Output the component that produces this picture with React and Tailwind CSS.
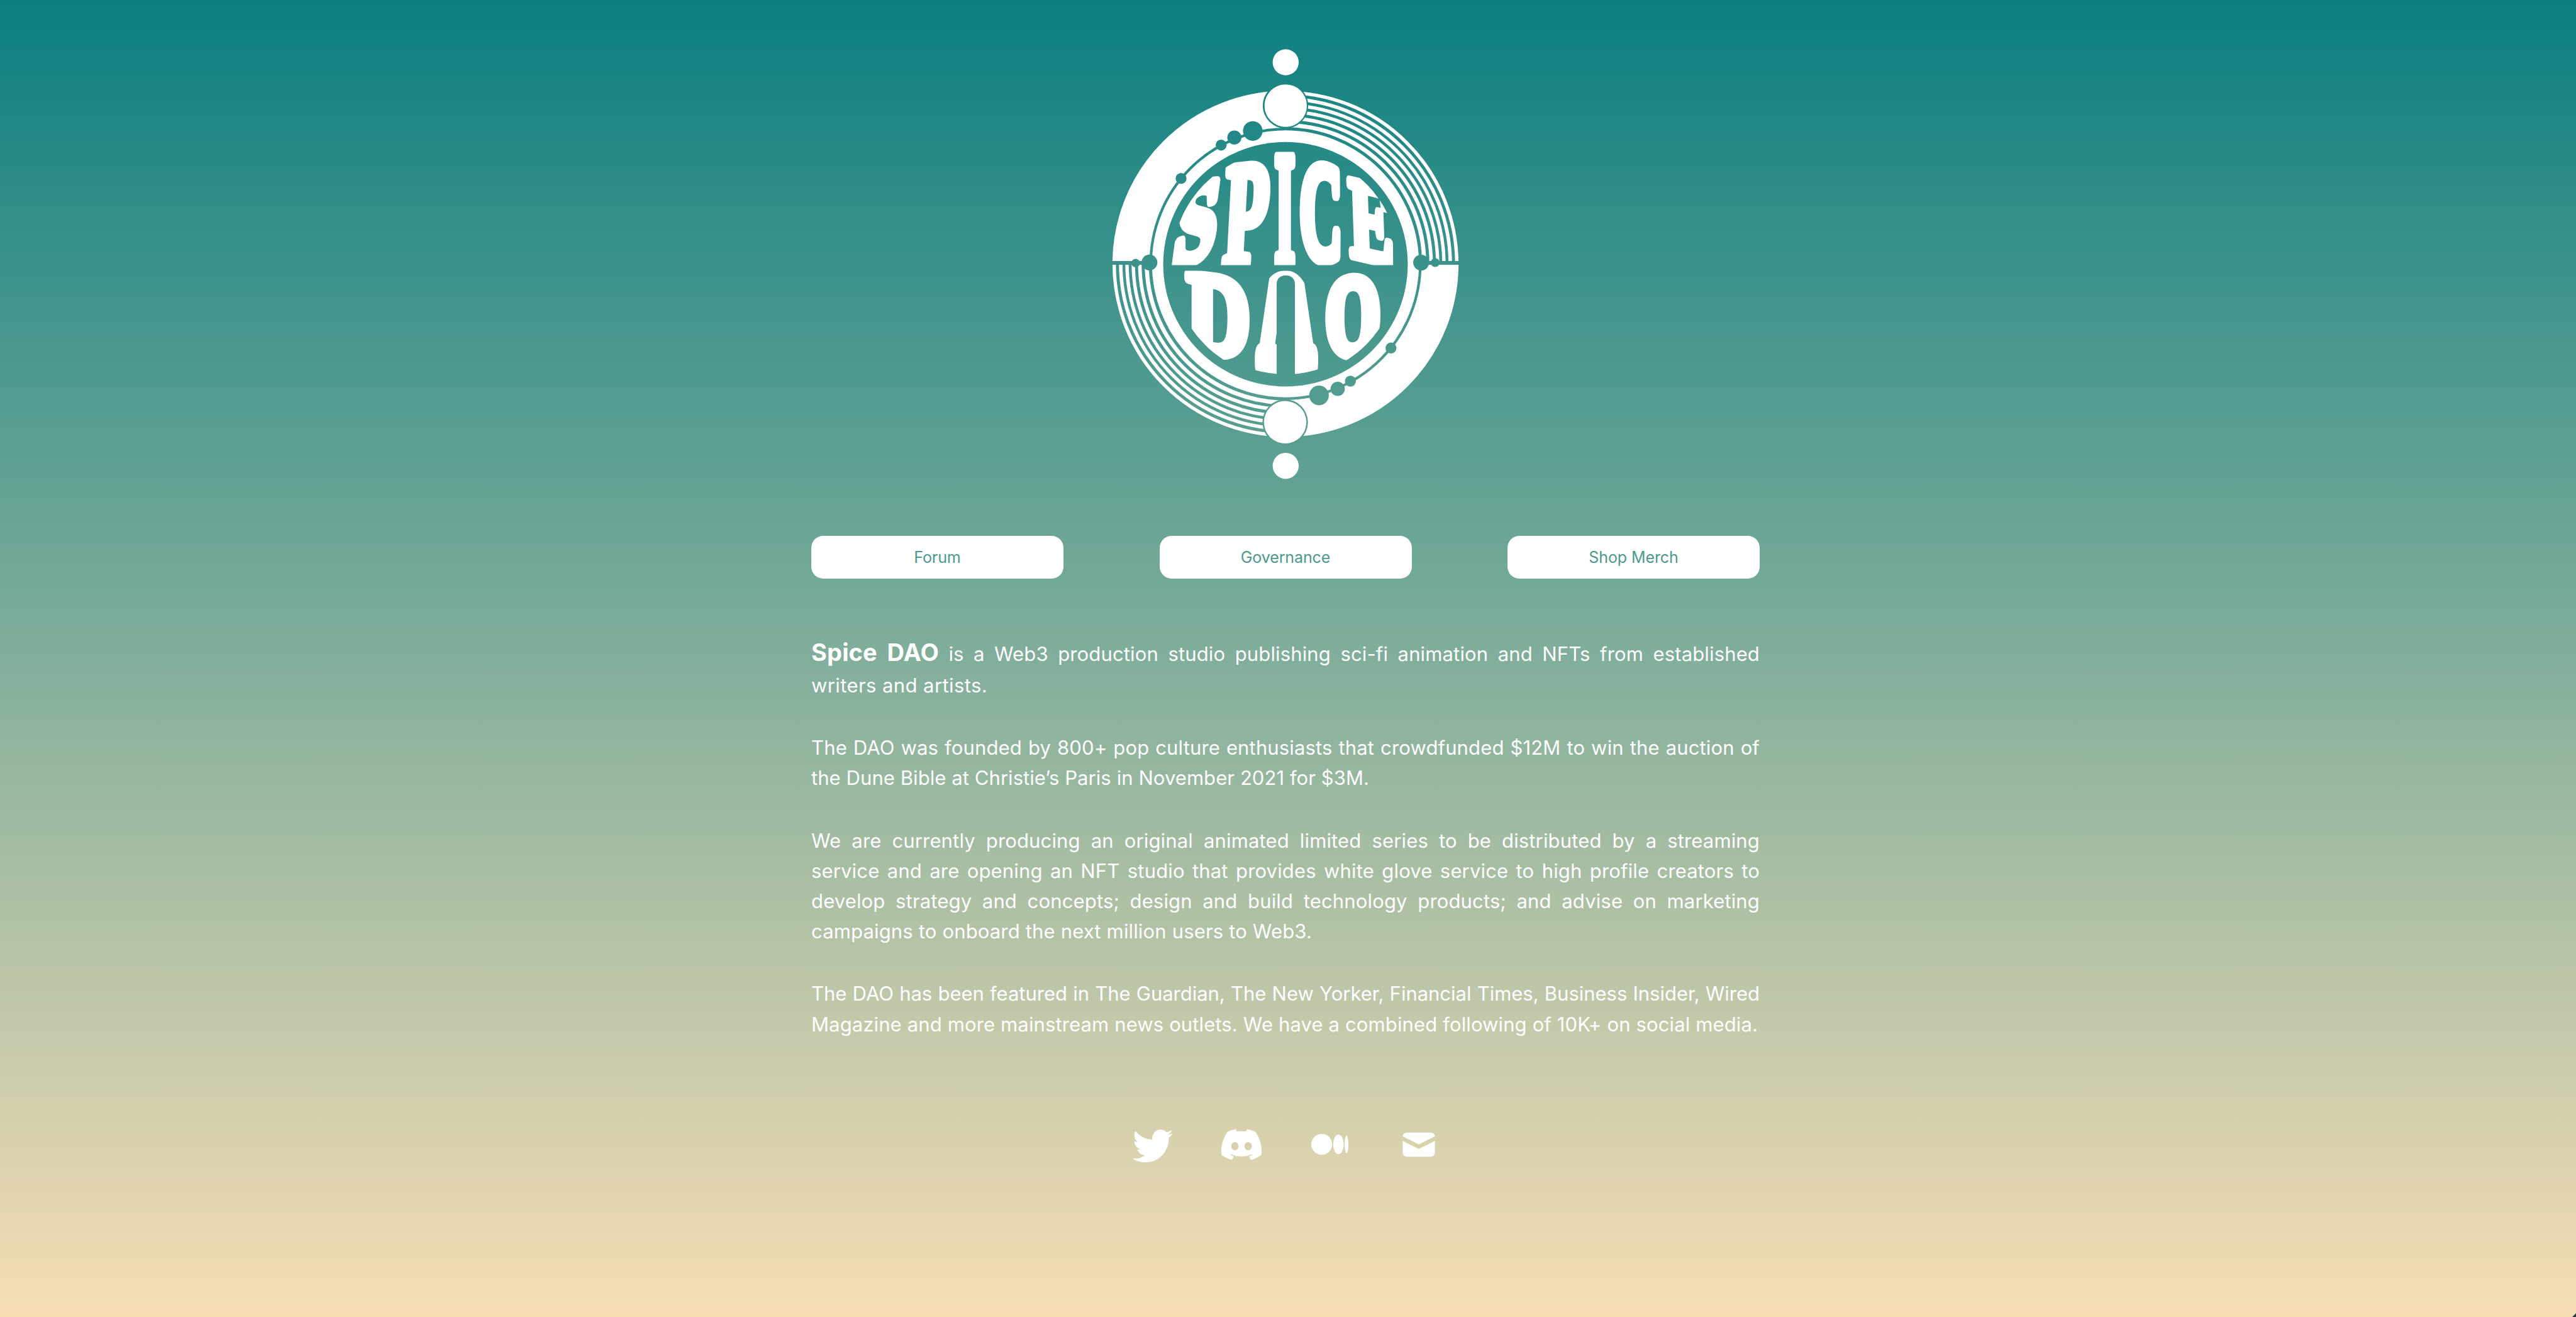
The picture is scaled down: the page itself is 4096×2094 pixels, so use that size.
import React from "react";
import { BsTwitter, BsDiscord, BsMedium } from "react-icons/bs";
import { HiMail } from "react-icons/hi";

const CX = 2044;
const CY = 419.5;

// Concentric stripes: mid radius and thickness
const stripes = [
  [272.4, 5.4],
  [262, 5.6],
  [252, 5.4],
  [242, 5.4],
  [231.6, 5.6],
  [220.5, 6.6],
];

const beads = [
  [1992, 208.3, 15.6],
  [1962.7, 218.7, 11.2],
  [1941.7, 230.7, 8.7],
  [1878, 283.7, 8.7],
  [1827.7, 417.3, 12.6],
  [1805.7, 418.3, 6.8],
  [2259.7, 417.5, 12.6],
  [2282, 417.5, 7],
  [2097.3, 628.7, 15.6],
  [2127, 618.3, 11.3],
  [2147.3, 606, 8.7],
  [2211.7, 553.3, 8.7],
];

// ch, target box x y w h, glyph box per 100 units (left, bottom, right, top), skewY, skewX, stroke
const upper = [
  ["S", 1875, 290, 57, 125, [3.5, -1.9, 51.4, 69.2], -17, -8, 16],
  ["P", 1949, 260, 67, 158, [1.6, 0, 60, 67.6], -6, -3, 14],
  ["I", 2028, 246, 30, 172, [2, 0, 37, 67.6], 0, 0, 14],
  ["C", 2071, 259, 60, 156, [4.9, -1.9, 68.7, 69.1], 5, 0, 16],
  ["E", 2147, 291, 65, 122, [1.6, 0, 64.1, 67.6], 13, 2, 13],
];
const letterD = ["D", 1889, 438, 94, 125, [1.4, 0, 69, 67.6], 7, 0, 15];
const letterA = ["A", 2003, 362, 82, 216, [0.9, 0, 68.9, 69], 0, 0, 31];
const letterO = ["O", 2112, 439, 78, 126, [3.5, -1.9, 74.3, 69.1], -3, 0, 17];

function Letter({ item }) {
  const [ch, x, y, w, h, [l, b, r, t], skewY, skewX, stroke] = item;
  const sx = w / (r - l);
  const sy = h / (t - b);
  return (
    <g
      transform={`translate(${x + w / 2} ${y + h / 2}) skewY(${skewY}) skewX(${skewX}) translate(${-w / 2} ${-h / 2})`}
    >
      <text
        transform={`scale(${sx} ${sy}) translate(${-l} ${t})`}
        className="font-['Liberation_Serif',serif] text-[100px] font-bold"
        fill="white"
        stroke="white"
        strokeWidth={stroke}
        strokeLinejoin="round"
        vectorEffect="non-scaling-stroke"
      >
        {ch}
      </text>
    </g>
  );
}

function Logo() {
  return (
    <svg className="block h-[700px] w-[560px]" viewBox="1764 70 560 700" role="img" aria-label="Spice DAO">
      <defs>
        <mask id="ring" maskUnits="userSpaceOnUse" x="1764" y="70" width="560" height="700">
          <rect x="1764" y="70" width="560" height="700" fill="white" />
          <circle cx={CX} cy={CY} r="214.3" fill="none" stroke="black" strokeWidth="4.2" />
          <circle cx={CX} cy="420.2" r="194.4" fill="black" />
          <rect x="1764" y="415" width="66" height="6" fill="black" />
          <rect x="2258" y="415" width="66" height="6" fill="black" />
          {beads.map(([x, y, r], i) => (
            <circle key={i} cx={x} cy={y} r={r} fill="black" />
          ))}
          <circle cx="2044" cy="168" r="36.2" fill="black" />
          <circle cx="2043.5" cy="671.3" r="36.2" fill="black" />
        </mask>
        <clipPath id="disc">
          <circle cx={CX} cy="420" r="181" />
        </clipPath>
        <clipPath id="upper">
          <rect x="1850" y="230" width="390" height="191.5" />
        </clipPath>
        <clipPath id="lower">
          <rect x="1850" y="430.5" width="390" height="170" />
        </clipPath>
        <clipPath id="arch">
          <path d="M1984 585L1999 520Q2002 430 2044 430Q2083 430 2092 520L2108 583Q2080 594 2046 596Q2010 594 1984 585Z" />
        </clipPath>
        <mask id="slot" maskUnits="userSpaceOnUse" x="1970" y="340" width="150" height="270">
          <rect x="1970" y="340" width="150" height="270" fill="white" />
          <rect x="2030" y="438" width="29" height="190" rx="13" fill="black" />
        </mask>
      </defs>

      <g mask="url(#ring)" fill="none" stroke="white">
        <circle cx={CX} cy={CY} r="204" strokeWidth="22" />
        <path d={`M${CX - 245} 418A245 245 0 0 1 ${CX} 174.5`} strokeWidth="60.4" />
        <path d={`M${CX + 245} 418A245 245 0 0 1 ${CX} 664.5`} strokeWidth="60.4" />
        {stripes.map(([r, w]) => (
          <g key={r} strokeWidth={w}>
            <path d={`M${CX} ${CY - r}A${r} ${r} 0 0 1 ${CX + r} 418`} />
            <path d={`M${CX} ${CY + r}A${r} ${r} 0 0 1 ${CX - r} 418`} />
          </g>
        ))}
      </g>

      <g fill="white">
        <circle cx="2044.3" cy="99" r="20.7" />
        <circle cx="2044.3" cy="168" r="33.7" />
        <circle cx="2043.5" cy="671.3" r="33.7" />
        <circle cx="2044.3" cy="740.7" r="20.7" />
      </g>

      <g clipPath="url(#disc)">
        <g clipPath="url(#upper)">
          {upper.map((item) => (
            <Letter key={item[0]} item={item} />
          ))}
        </g>
        <g clipPath="url(#lower)">
          <Letter item={letterD} />
          <g clipPath="url(#arch)">
            <g mask="url(#slot)">
              <Letter item={letterA} />
            </g>
          </g>
          <Letter item={letterO} />
        </g>
      </g>
    </svg>
  );
}

const Line = ({ children, className = "w-full" }) => (
  <span className={`block whitespace-nowrap [text-align-last:justify] ${className}`}>{children}</span>
);

const NavButton = ({ children }) => (
  <a
    href="#"
    className="flex h-[68px] w-[401px] items-center justify-center rounded-[19px] bg-white pt-px text-[25px] tracking-[-0.1px] text-[#4a9a8b]"
  >
    {children}
  </a>
);

export default function App() {
  return (
    <div className="relative h-[2094px] w-full overflow-hidden bg-linear-to-b/srgb from-[#0b7f80] to-[#f8deb5] pr-2 font-['Inter',sans-serif] text-white">
      <div className="mx-auto flex w-[1508px] flex-col items-center pt-[70px]">
        <Logo />

        <nav className="mt-[82px] flex w-full justify-between">
          <NavButton>Forum</NavButton>
          <NavButton>Governance</NavButton>
          <NavButton>Shop Merch</NavButton>
        </nav>

        <main className="mt-[96px] flex w-full flex-col gap-[51px] text-[31px] leading-[48.2px] tracking-[0.15px]">
          <p>
            <Line className="h-[50px] w-full">
              <b className="text-[38px] leading-none">Spice DAO</b> is a Web3 production studio publishing sci-fi animation and NFTs from established
            </Line>
            <Line className="w-[280px] tracking-[0.4px]">writers and artists.</Line>
          </p>
          <p>
            <Line>The DAO was founded by 800+ pop culture enthusiasts that crowdfunded $12M to win the auction of</Line>
            <Line className="w-[887px] tracking-[0.05px]">the Dune Bible at Christie’s Paris in November 2021 for $3M.</Line>
          </p>
          <p>
            <Line>We are currently producing an original animated limited series to be distributed by a streaming</Line>
            <Line>service and are opening an NFT studio that provides white glove service to high profile creators to</Line>
            <Line>develop strategy and concepts; design and build technology products; and advise on marketing</Line>
            <Line className="w-[796px]">campaigns to onboard the next million users to Web3.</Line>
          </p>
          <p>
            <Line className="w-full tracking-[-0.02px]">The DAO has been featured in The Guardian, The New Yorker, Financial Times, Business Insider, Wired</Line>
            <Line className="w-[1505px] tracking-[0.12px]">Magazine and more mainstream news outlets. We have a combined following of 10K+ on social media.</Line>
          </p>
        </main>

        <footer className="mt-[135px] flex items-center gap-[77px]">
          <BsTwitter className="size-16" />
          <BsDiscord className="size-16" />
          <BsMedium className="mx-[2.5px] size-[59px]" />
          <HiMail className="size-16" />
        </footer>
      </div>

      <div className="absolute right-0 bottom-0 size-[6px] bg-[#24394b] [clip-path:polygon(100%_0,100%_100%,0_100%)]" />
    </div>
  );
}
